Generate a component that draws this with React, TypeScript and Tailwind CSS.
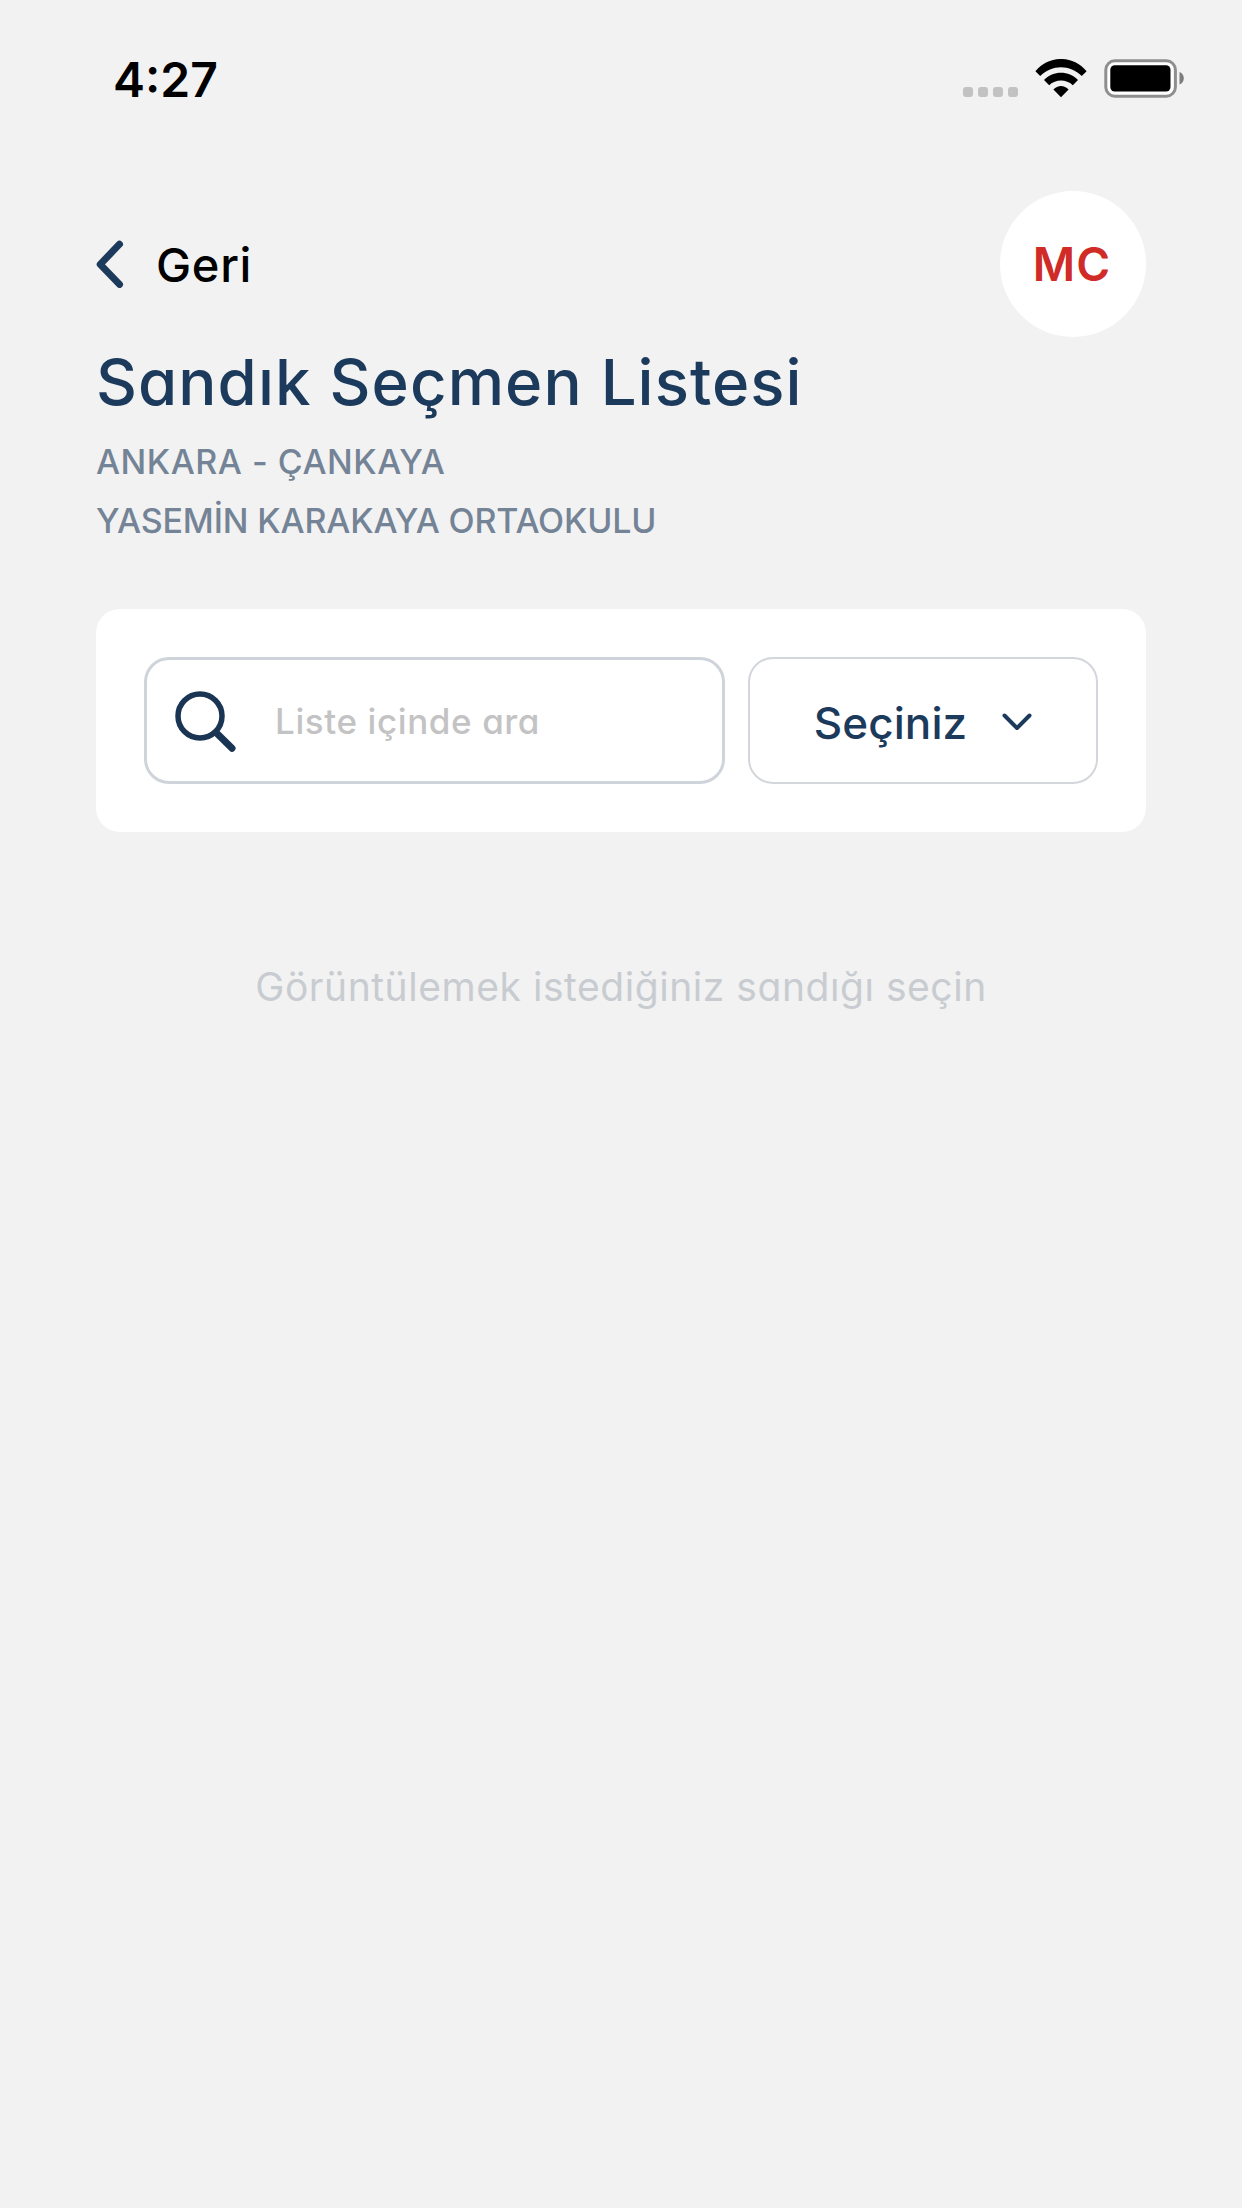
function StatusBar() {
  return (
    <div className="flex h-[158px] items-center justify-between pr-[57px] pl-[113px]">
      <span className="mt-px text-[48px] leading-none font-semibold text-black">
        4:27
      </span>
      <div className="-mt-[2px] flex items-center">
        <div className="mt-[27px] mr-[17px] flex gap-[5px]">
          <span className="size-[10px] rounded-[3px] bg-[#c2c2c2]" />
          <span className="size-[10px] rounded-[3px] bg-[#c2c2c2]" />
          <span className="size-[10px] rounded-[3px] bg-[#c2c2c2]" />
          <span className="size-[10px] rounded-[3px] bg-[#c2c2c2]" />
        </div>
        <svg width="52" height="39" viewBox="0 0 52 39" className="mr-[17px]">
          <path d="M0.4 12.2C14-4.1 38-4.1 51.6 12.2L46.8 17C35 5.2 17 5.2 5.2 17Z" />
          <path d="M9 21C18.5 11.3 33.5 11.3 43 21L37.8 26.2C31 20 21 20 14.2 26.2Z" />
          <path d="M18.4 30.5C22.8 25.8 29.2 25.8 33.6 30.5L26 38.2Z" />
        </svg>
        <svg width="81" height="39" viewBox="0 0 81 39">
          <rect
            x="1.8"
            y="1.8"
            width="69.6"
            height="35.4"
            rx="9"
            fill="#fff"
            stroke="#8e8e8e"
            strokeWidth="3"
          />
          <rect x="6.3" y="6.3" width="60.2" height="26.2" rx="4.5" />
          <path d="M75.5 13C81.2 15 81.2 23.5 75.5 25.5Z" fill="#7c7c7c" />
        </svg>
      </div>
    </div>
  );
}

function Header() {
  return (
    <header className="mt-[33px]">
      <div className="flex items-center justify-between">
        <button type="button" className="flex items-center">
          <svg
            width="28"
            height="48"
            viewBox="0 0 28 48"
            fill="none"
            stroke="#1c3a5b"
            strokeWidth="7"
            strokeLinecap="round"
            strokeLinejoin="round"
          >
            <path d="M23.5 4.2L4.2 24.3L23.5 44.4" />
          </svg>
          <span className="ml-[32px] text-[47px] leading-none font-medium tracking-[0.7px] text-black">
            Geri
          </span>
        </button>
        <div className="flex size-[146px] items-center justify-center rounded-full bg-white">
          <span className="pr-[2px] text-[46px] leading-none font-semibold tracking-[1px] text-[#d02b27]">
            MC
          </span>
        </div>
      </div>
      <h1 className="text-[63.5px] leading-[90px] font-medium tracking-[1.05px] text-[#1c3a5b]">
        Sandık Seçmen Listesi
      </h1>
      <div className="mt-[5px] text-[34px] leading-[59px] font-medium text-[#748496]">
        <p className="tracking-[0.5px]">ANKARA - ÇANKAYA</p>
        <p className="tracking-[-0.17px]">YASEMİN KARAKAYA ORTAOKULU</p>
      </div>
    </header>
  );
}

function SearchCard() {
  return (
    <div className="mt-[59px] flex h-[223px] gap-[23px] rounded-[24px] bg-white p-12">
      <div className="flex w-[581px] items-center rounded-[25px] border-3 border-[#ced4da]">
        <svg
          width="62"
          height="62"
          viewBox="0 0 62 62"
          fill="none"
          stroke="#1a3454"
          className="ml-[27px] shrink-0"
        >
          <circle cx="26" cy="26" r="22" strokeWidth="5.5" />
          <path d="M42 42.5L58 58.2" strokeWidth="7" strokeLinecap="round" />
        </svg>
        <input
          type="text"
          placeholder="Liste içinde ara"
          className="mt-px ml-[39px] min-w-0 flex-1 text-[35px] font-medium tracking-[0.6px] outline-none placeholder:text-[#c3c3c4]"
        />
      </div>
      <button
        type="button"
        className="flex flex-1 items-center justify-center rounded-[25px] border-2 border-[#d3d7db] text-[#1c3a5b]"
      >
        <span className="mt-[4px] text-[44px] leading-none font-medium tracking-[0.1px]">
          Seçiniz
        </span>
        <svg
          width="30"
          height="18"
          viewBox="0 0 30 18"
          fill="none"
          stroke="currentColor"
          strokeWidth="4"
          strokeLinecap="round"
          strokeLinejoin="round"
          className="mt-[2px] ml-[35px]"
        >
          <path d="M2.5 2.5L15 15L27.5 2.5" />
        </svg>
      </button>
    </div>
  );
}

function App() {
  return (
    <div className="min-h-[2208px] w-[1242px] bg-[#f2f2f2] font-['Inter',sans-serif] [font-feature-settings:'cv11']">
      <StatusBar />
      <main className="px-24">
        <Header />
        <SearchCard />
        <p className="mt-[125px] text-center text-[39px] leading-[60px] tracking-[0.55px] text-[#c8ccd1]">
          Görüntülemek istediğiniz sandığı seçin
        </p>
      </main>
    </div>
  );
}

export default App;
